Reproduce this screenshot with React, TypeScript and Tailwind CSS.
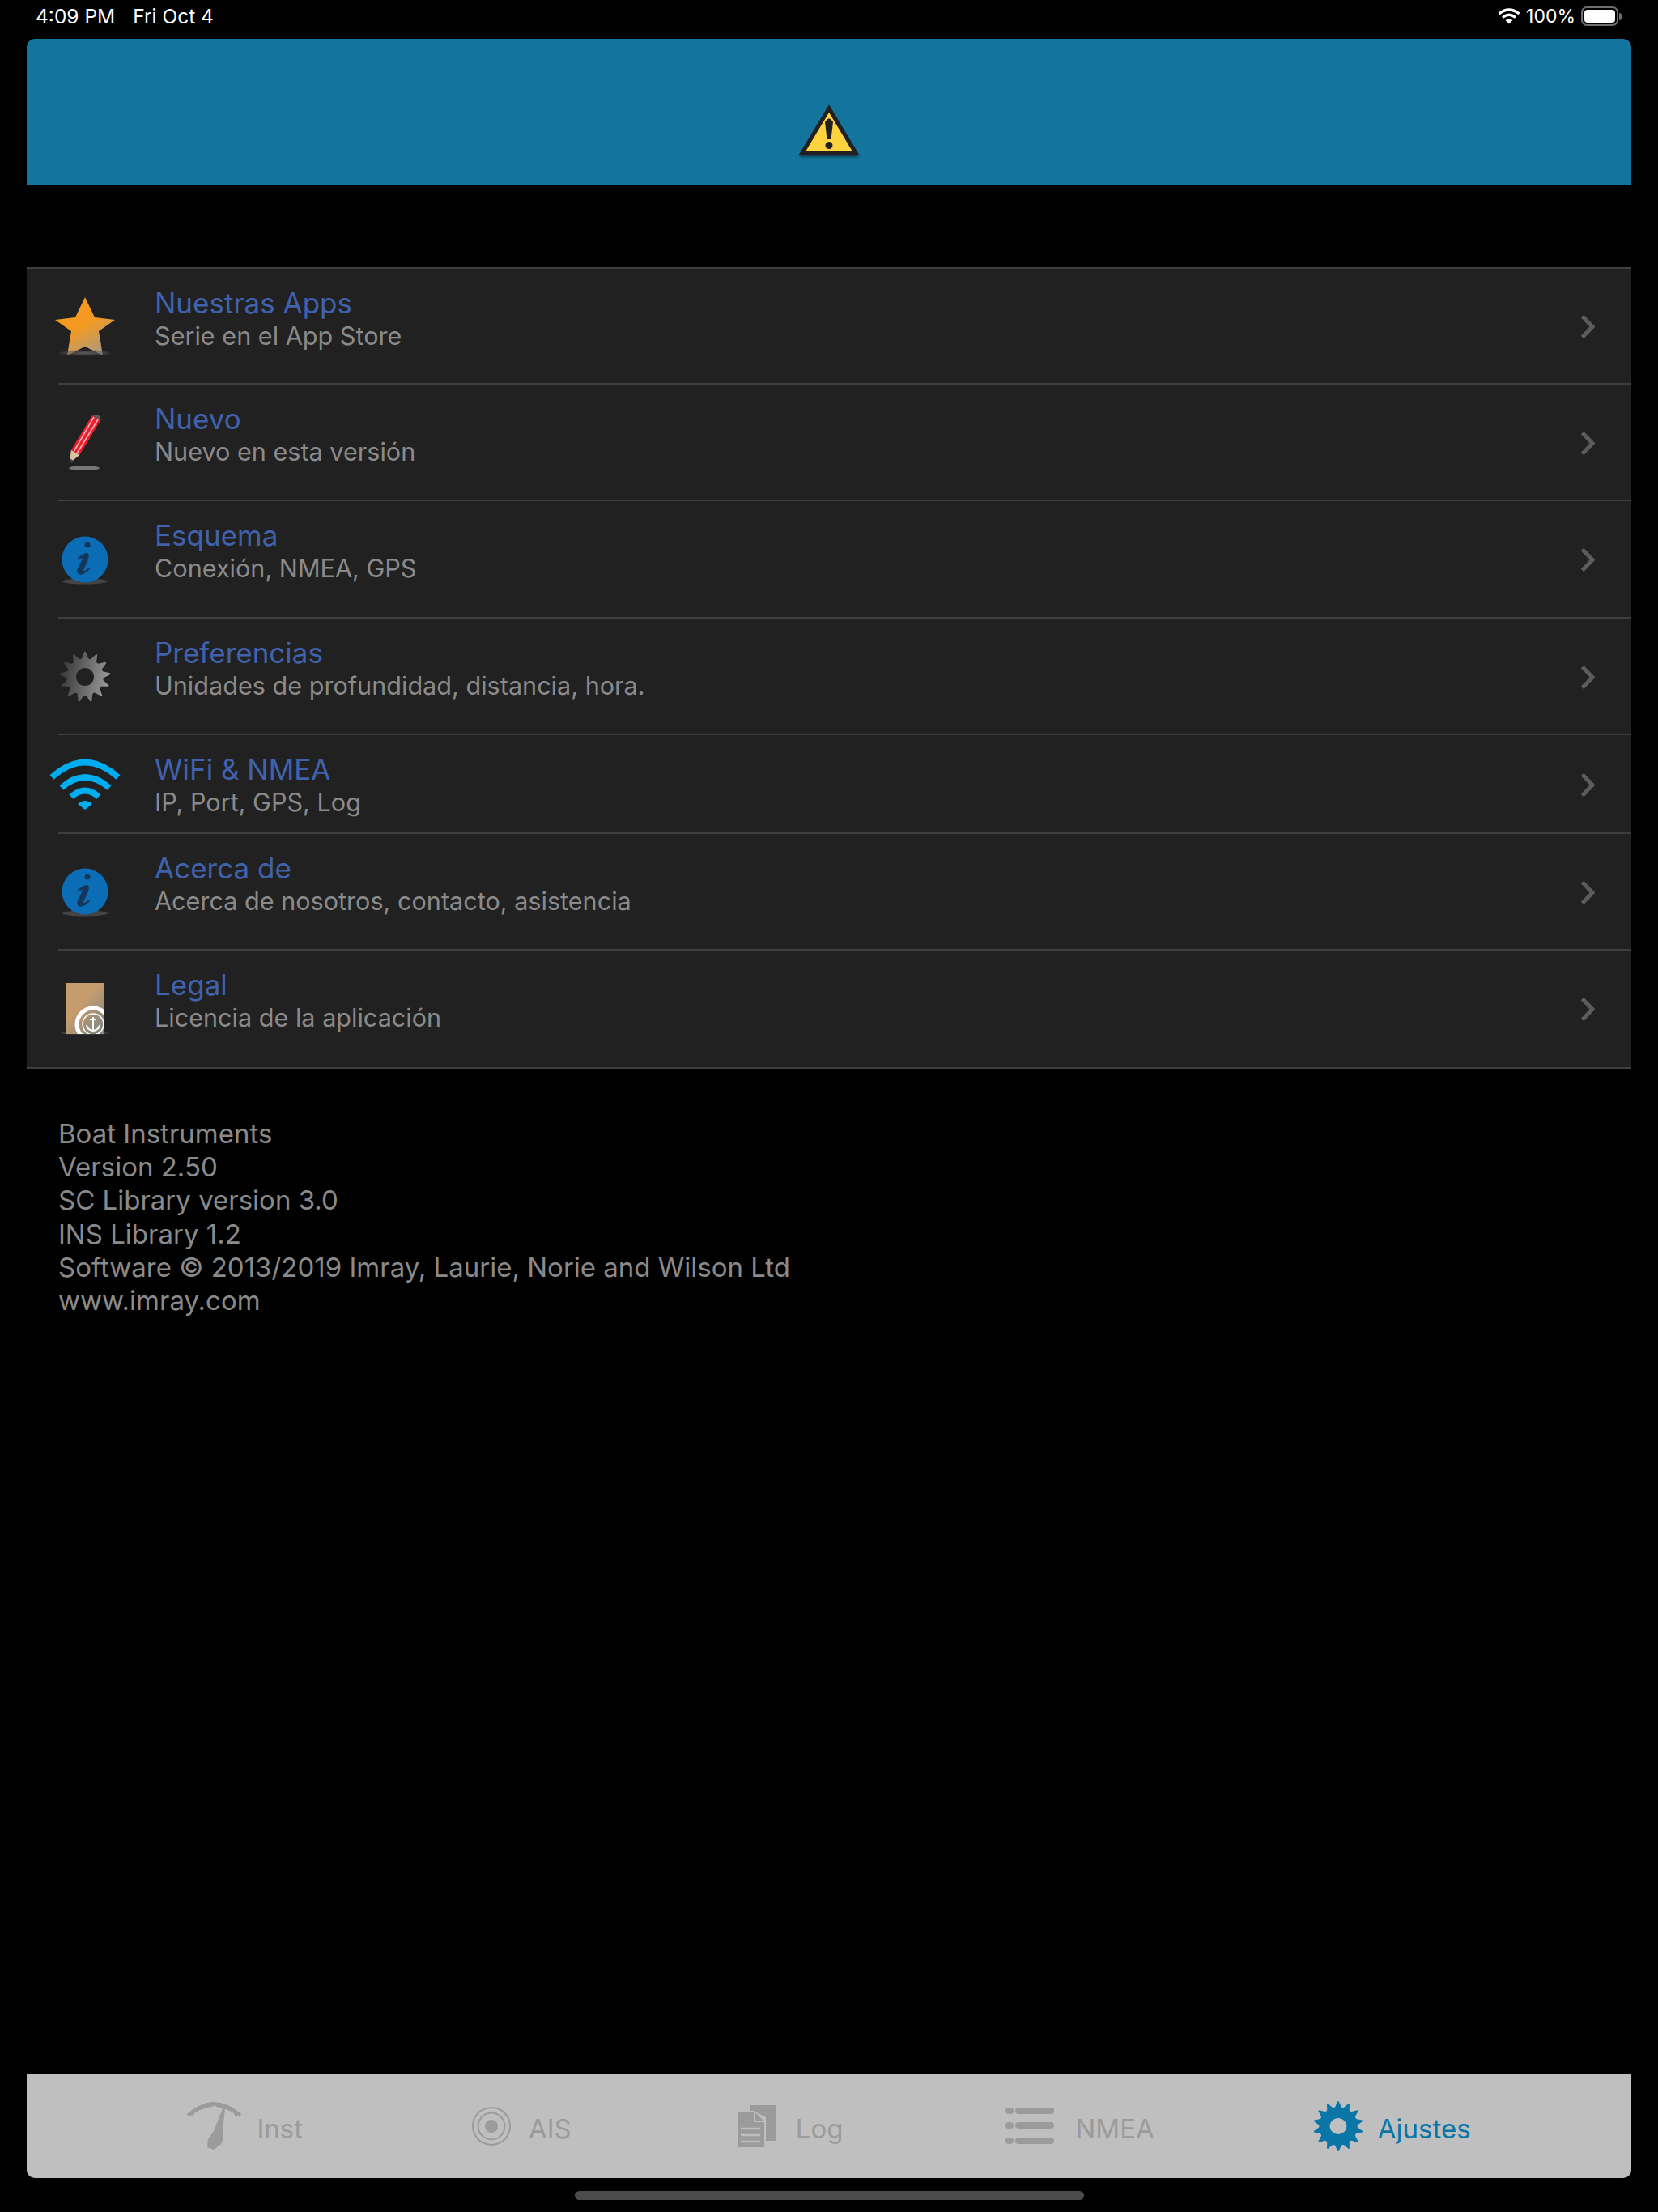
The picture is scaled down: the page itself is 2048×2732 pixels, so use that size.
import { ReactNode } from 'react';

// gear outline with pointed teeth, built from polar points
function gearPath(cx: number, cy: number, outer: number, inner: number, teeth: number) {
  const pt = (r: number, a: number) =>
    `${(cx + r * Math.cos(a)).toFixed(2)} ${(cy + r * Math.sin(a)).toFixed(2)}`;
  const step = (Math.PI * 2) / teeth;
  let d = '';
  for (let i = 0; i < teeth; i++) {
    const a = i * step - Math.PI / 2;
    const start = pt(inner, a - step * 0.36);
    d += i === 0 ? `M${start}` : ` Q${pt(inner * 0.97, a - step * 0.5)} ${start}`;
    d += ` L${pt(outer, a - step * 0.06)} Q${pt(outer + 1, a)} ${pt(outer, a + step * 0.06)} L${pt(inner, a + step * 0.36)}`;
  }
  const first = pt(inner, -Math.PI / 2 - step * 0.36);
  return `${d} Q${pt(inner * 0.97, -Math.PI / 2 - step * 0.5)} ${first} Z`;
}

function Chevron() {
  return (
    <svg width="18" height="31" viewBox="0 0 18 31" className="shrink-0">
      <path d="M2.5 2.5 L15 15.5 L2.5 28.5" fill="none" stroke="#5c5c60" strokeWidth="5" />
    </svg>
  );
}

function StarIcon() {
  return (
    <svg width="76" height="74" viewBox="0 0 76 74">
      <defs>
        <linearGradient id="starFill" x1="0.3" y1="0.2" x2="0.75" y2="1">
          <stop offset="0.35" stopColor="#f59a20" />
          <stop offset="1" stopColor="#a89a86" />
        </linearGradient>
        <radialGradient id="starShadow">
          <stop offset="0" stopColor="#8a8a8a" />
          <stop offset="1" stopColor="#3a3a3a" />
        </radialGradient>
      </defs>
      <path
        d="M38 0 L50 25 L75 28 L55 42 L60 72 L38 61 L16 72 L21 42 L1 28 L26 25 Z"
        fill="url(#starFill)"
      />
      <ellipse cx="38" cy="69" rx="32" ry="3.5" fill="url(#starShadow)" opacity="0.55" />
    </svg>
  );
}

function PencilIcon() {
  return (
    <svg width="42" height="70" viewBox="0 0 42 70">
      <ellipse cx="20" cy="66" rx="19" ry="3" fill="#777" />
      <path d="M29.8 1 L40.2 7 L14.2 50 L3.8 44 Z" fill="#ed1c2e" />
      <path d="M32 3 L7 46 M37 6 L11 48" stroke="#eeb6b6" strokeWidth="1.5" />
      <path d="M3.8 44 L14.2 50 L2 60 Z" fill="#dcc3a0" />
      <path d="M2.6 54 L2 60 L6.5 57 Z" fill="#444" />
      <path d="M30 1 Q33 -1 38 1 Q42 4 40 7 Z" fill="#5a5a5e" />
    </svg>
  );
}

function InfoIcon() {
  return (
    <svg width="60" height="60" viewBox="0 0 60 60">
      <ellipse cx="30" cy="56" rx="28" ry="3.5" fill="#444" />
      <circle cx="30" cy="29" r="28.5" fill="#0a6db5" />
      <circle cx="33" cy="11" r="3.5" fill="#14365a" />
      <path
        d="M21 27 Q29 20 33 21 Q36 23 34 29 L28 42 Q28 45 35 39 L36 41 Q27 50 22 47 Q19 45 21 40 L27 28 Q26 26 22 30 Z"
        fill="#14365a"
      />
    </svg>
  );
}

function GearIcon() {
  return (
    <svg width="64" height="66" viewBox="0 0 64 66">
      <defs>
        <linearGradient id="gearFill" x1="0" y1="0.3" x2="1" y2="0.5">
          <stop offset="0" stopColor="#333333" />
          <stop offset="1" stopColor="#9a9a9a" />
        </linearGradient>
      </defs>
      <path d={gearPath(32, 33, 31, 23, 13)} fill="url(#gearFill)" />
      <circle cx="32" cy="33" r="11" fill="#212121" />
    </svg>
  );
}

function WifiIcon() {
  return (
    <svg width="88" height="62" viewBox="0 0 88 62">
      <g fill="none" stroke="#00aeef" strokeWidth="7.5">
        <path d="M3 22 Q44 -15 85 22" />
        <path d="M15 35 Q44 9 74 35" />
        <path d="M27 46 Q44 31 61 46" />
      </g>
      <path d="M35 55 Q44 47 53 55 L44 62 Z" fill="#00aeef" />
    </svg>
  );
}

function LegalIcon() {
  return (
    <svg width="64" height="68" viewBox="0 0 64 68">
      <defs>
        <linearGradient id="bookFill" x1="0" y1="0.2" x2="0.7" y2="1">
          <stop offset="0.4" stopColor="#c69c6d" />
          <stop offset="1" stopColor="#8a8a84" />
        </linearGradient>
        <clipPath id="bookClip">
          <rect x="9" y="2" width="47" height="63" />
        </clipPath>
      </defs>
      <ellipse cx="32" cy="64" rx="31" ry="2" fill="#3a3a3a" />
      <rect x="9" y="2" width="47" height="63" fill="url(#bookFill)" />
      <g clipPath="url(#bookClip)" fill="none" stroke="#fff">
        <circle cx="42" cy="53" r="20" strokeWidth="5" />
        <circle cx="42" cy="53" r="13" strokeWidth="1.5" />
        <path d="M42 44 V61 M34 54 Q35 60 42 61 Q49 60 50 54 M38 47 H46" strokeWidth="2" />
      </g>
    </svg>
  );
}

type Row = { title: string; sub: string; icon: ReactNode; height: string };

const rows: Row[] = [
  { title: 'Nuestras Apps', sub: 'Serie en el App Store', icon: <StarIcon />, height: 'h-[143px]' },
  { title: 'Nuevo', sub: 'Nuevo en esta versión', icon: <PencilIcon />, height: 'h-[144px]' },
  { title: 'Esquema', sub: 'Conexión, NMEA, GPS', icon: <InfoIcon />, height: 'h-[145px]' },
  { title: 'Preferencias', sub: 'Unidades de profundidad, distancia, hora.', icon: <GearIcon />, height: 'h-[144px]' },
  { title: 'WiFi & NMEA', sub: 'IP, Port, GPS, Log', icon: <WifiIcon />, height: 'h-[122px]' },
  { title: 'Acerca de', sub: 'Acerca de nosotros, contacto, asistencia', icon: <InfoIcon />, height: 'h-[144px]' },
  { title: 'Legal', sub: 'Licencia de la aplicación', icon: <LegalIcon />, height: 'h-[144px]' },
];

const footerLines = [
  'Boat Instruments',
  'Version 2.50',
  'SC Library version 3.0',
  'INS Library 1.2',
  'Software © 2013/2019 Imray, Laurie, Norie and Wilson Ltd',
  'www.imray.com',
];

function SettingsRow({ row, last }: { row: Row; last: boolean }) {
  return (
    <div className={`relative flex items-center pl-[27px] pr-[45px] ${row.height}`}>
      <div className="flex w-[90px] shrink-0 items-center justify-center">{row.icon}</div>
      <div className="ml-[41px] flex-1 self-start pt-[21px]">
        <div className="text-[35px] leading-[42px] text-[#4062ac]">{row.title}</div>
        <div className="text-[30.6px] leading-[39px] text-[#8a8a8a]">{row.sub}</div>
      </div>
      <Chevron />
      {!last && <div className="absolute bottom-0 left-[39px] right-0 h-[2px] bg-[#3f3f3f]" />}
    </div>
  );
}

function GaugeTab() {
  return (
    <svg width="67" height="59" viewBox="0 0 67 59" fill="#9b9b9b">
      <path d="M0 15 Q33 -15 67 15 L65 19 L63 16 L60 19 L58 14 Q33 -2 9 14 L7 19 L4 16 L2 19 Z" />
      <path d="M31 5 H36 L35 9 H32 Z" fill="#bfbfbf" />
      <path d="M44 8 L47 8 L44 36 L45 45 L42 52 L33 59 L25 56 L26 46 L33 36 Z" />
    </svg>
  );
}

function TargetTab() {
  return (
    <svg width="48" height="48" viewBox="0 0 48 48" fill="none" stroke="#9b9b9b">
      <circle cx="24" cy="24" r="23" strokeWidth="2" />
      <circle cx="24" cy="24" r="16.5" strokeWidth="2" />
      <circle cx="24" cy="24" r="8" fill="#9b9b9b" stroke="none" />
    </svg>
  );
}

function LogTab() {
  return (
    <svg width="47" height="52" viewBox="0 0 47 52">
      <path d="M15 0 H47 V44 H35 V15 L20 7 H15 Z" fill="#9b9b9b" />
      <path d="M0 8 H21 L33 20 V52 H0 Z" fill="#9b9b9b" />
      <path d="M21 8 V20 H33" fill="none" stroke="#bfbfbf" strokeWidth="2" />
      <path d="M4 29 H28 M4 37 H28 M4 45 H28" stroke="#bfbfbf" strokeWidth="2.5" />
    </svg>
  );
}

function ListTab() {
  return (
    <svg width="60" height="46" viewBox="0 0 60 46" fill="#9b9b9b">
      <rect x="0" y="0" width="10" height="8" rx="4" />
      <rect x="12" y="0" width="48" height="8" rx="4" />
      <rect x="0" y="18" width="10" height="8" rx="4" />
      <rect x="12" y="18" width="48" height="8" rx="4" />
      <rect x="0" y="37" width="10" height="8" rx="4" />
      <rect x="12" y="37" width="48" height="8" rx="4" />
    </svg>
  );
}

function SettingsTab() {
  return (
    <svg width="62" height="62" viewBox="0 0 62 62">
      <path d={gearPath(31, 31, 30.5, 24, 14)} fill="#0a76a8" />
      <ellipse cx="31" cy="31" rx="10.5" ry="10" fill="#bfbfbf" />
    </svg>
  );
}

const tabs = [
  { label: 'Inst', icon: <GaugeTab />, cls: 'mr-[209px] gap-[19px]', color: 'text-[#9b9b9b]' },
  { label: 'AIS', icon: <TargetTab />, cls: 'mr-[205px] gap-[22px]', color: 'text-[#9b9b9b]' },
  { label: 'Log', icon: <LogTab />, cls: 'mr-[201px] gap-[25px]', color: 'text-[#9b9b9b]' },
  { label: 'NMEA', icon: <ListTab />, cls: 'mr-[196px] gap-[26px]', color: 'text-[#9b9b9b]' },
  { label: 'Ajustes', icon: <SettingsTab />, cls: 'gap-[18px]', color: 'text-[#0a76a8]' },
];

export default function App() {
  return (
    <div className="flex h-[2732px] w-[2048px] flex-col bg-black font-['Inter','Liberation_Sans',sans-serif]">
      <div className="flex h-[48px] shrink-0 items-center justify-between pb-[8px] pl-[44px] pr-[45px] text-white">
        <div className="flex gap-[22px] text-[24.5px] leading-none">
          <span>4:09 PM</span>
          <span>Fri Oct 4</span>
        </div>
        <div className="flex items-center gap-[7px] text-[23px] leading-none">
          <svg width="28" height="20" viewBox="0 0 28 20" fill="none" stroke="#fff" strokeWidth="3.2">
            <path d="M1.5 7 Q14 -3 26.5 7" />
            <path d="M6 11.5 Q14 5 22 11.5" />
            <path d="M14 19.5 L9.5 15 Q14 12 18.5 15 Z" fill="#fff" stroke="none" />
          </svg>
          <span>100%</span>
          <div className="flex items-center gap-[1px]">
            <div className="flex h-[24px] w-[46px] items-center rounded-[7px] border-2 border-[#6f6f6f] p-[2px]">
              <div className="h-full w-full rounded-[4px] bg-white" />
            </div>
            <div className="h-[9px] w-[3px] rounded-r-full bg-[#6f6f6f]" />
          </div>
        </div>
      </div>

      <div className="mx-[33px] flex h-[180px] shrink-0 justify-center rounded-t-[10px] bg-[#13759d] pt-[80px]">
        <svg width="84" height="70" viewBox="0 0 84 70">
          <defs>
            <filter id="warnShadow" x="-20%" y="-20%" width="140%" height="140%">
              <feGaussianBlur stdDeviation="1.5" />
            </filter>
          </defs>
          <path d="M42 8 L79 66 H5 Z" fill="#0b2a3a" opacity="0.75" filter="url(#warnShadow)" />
          <path d="M42 6 L75 61 H9 Z" fill="#ffd23f" stroke="#231f20" strokeWidth="5" strokeLinejoin="miter" />
          <path d="M37 23 Q42 14 47 23 L44.5 44 H39.5 Z" fill="#231f20" />
          <circle cx="42" cy="51.5" r="4.5" fill="#231f20" />
        </svg>
      </div>

      <div className="mx-[33px] mt-[102px] shrink-0 border-y-2 border-[#3f3f3f] bg-[#212121]">
        {rows.map((row, i) => (
          <SettingsRow key={row.title} row={row} last={i === rows.length - 1} />
        ))}
      </div>

      <div className="mt-[60px] pl-[72px] text-[33px] leading-[41.2px] text-[#8a8a8a]">
        {footerLines.map((line) => (
          <div key={line}>{line}</div>
        ))}
      </div>

      <div className="flex-1" />

      <div className="mx-[33px] flex h-[129px] shrink-0 items-center justify-center rounded-b-[10px] bg-[#bfbfbf]">
        {tabs.map((tab) => (
          <div key={tab.label} className={`flex items-center ${tab.cls}`}>
            {tab.icon}
            <span className={`pt-[8px] text-[33px] leading-none ${tab.color}`}>{tab.label}</span>
          </div>
        ))}
      </div>

      <div className="flex h-[42px] shrink-0 justify-center pt-[16px]">
        <div className="h-[11px] w-[629px] rounded-full bg-[#4c4c4c]" />
      </div>
    </div>
  );
}
